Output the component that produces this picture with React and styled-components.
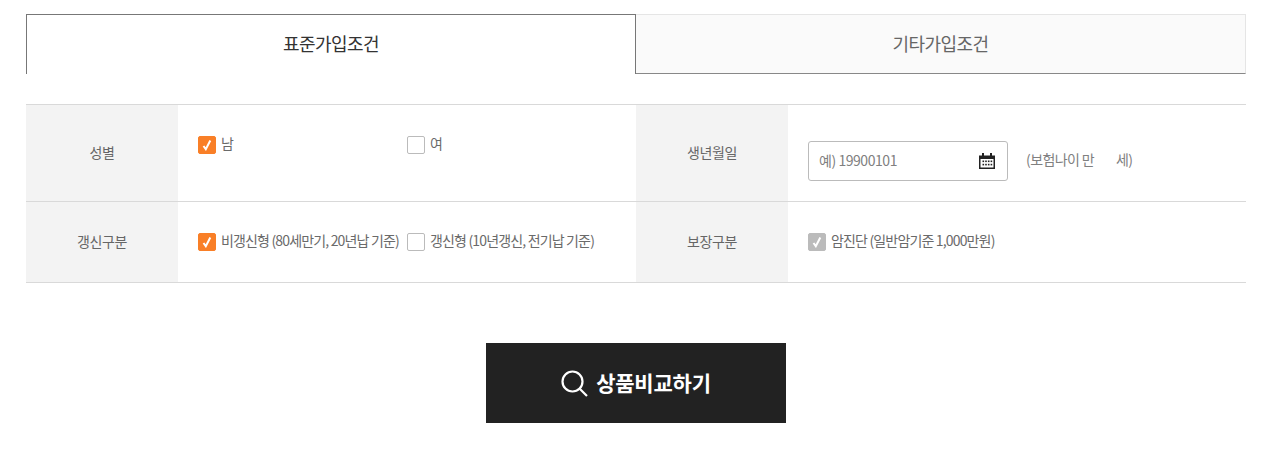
import React from "react";
import styled, { createGlobalStyle } from "styled-components";

const GlobalStyle = createGlobalStyle`
    html, body {
        margin: 0;
        padding: 0;
        background: #fff;
        font-family: "Noto Sans CJK KR", "Noto Sans", sans-serif;
    }
`

const Page = styled.div`
    width: 1220px;
    margin-left: 26px;
    padding-top: 14px;
    padding-bottom: 31px;
`

const Tabs = styled.div`
    display: flex;
    height: 60px;
`

const Tab = styled.div`
    box-sizing: border-box;
    width: 610px;
    height: 60px;
    display: flex;
    align-items: center;
    justify-content: center;
    font-size: 18px;
    letter-spacing: -0.55px;
    padding-bottom: 3px;
    color: ${p => p.$active ? "#333" : "#666"};
    background: ${p => p.$active ? "#fff" : "#fafafa"};
    border: 1px solid ${p => p.$active ? "#777" : "#e5e5e5"};
    border-bottom: ${p => p.$active ? "none" : "1px solid #888"};
    border-left: ${p => p.$active ? "1px solid #777" : "none"};
`

const Table = styled.div`
    display: grid;
    grid-template-columns: 152px 458px 152px 458px;
    margin-top: 30px;
    border-top: 1px solid #d9d9d9;
`

const Head = styled.div`
    display: flex;
    align-items: center;
    justify-content: center;
    box-sizing: border-box;
    padding-bottom: 3px;
    background: #f3f3f3;
    border-bottom: 1px solid #d9d9d9;
    font-size: 14px;
    letter-spacing: -0.4px;
    color: #666;
    height: ${p => p.$h}px;
`

const Cell = styled.div`
    display: flex;
    align-items: flex-start;
    padding: ${p => p.$top}px 0 0 20px;
    border-bottom: 1px solid #d9d9d9;
    height: ${p => p.$h}px;
    box-sizing: border-box;
`

const Option = styled.label`
    display: flex;
    align-items: center;
    width: 209px;
    height: 18px;
    flex: none;
`

const Box = styled.span`
    box-sizing: border-box;
    width: 18px;
    height: 18px;
    flex: none;
    display: flex;
    align-items: center;
    justify-content: center;
    border-radius: 2px;
    border: 1px solid ${p => p.$color || "#bbb"};
    background: ${p => p.$color || "#fff"};
`

const Label = styled.span`
    margin-left: 5px;
    font-size: 14px;
    letter-spacing: -0.84px;
    color: #6a6a6a;
    white-space: nowrap;
    position: relative;
    top: -2px;
`

const DateBox = styled.div`
    box-sizing: border-box;
    width: 200px;
    height: 40px;
    display: flex;
    align-items: center;
    justify-content: space-between;
    padding: 0 12px 0 10px;
    border: 1px solid #bbb;
    border-radius: 3px;
    font-size: 14px;
    letter-spacing: -0.45px;
    color: #808080;
`

const DateText = styled.span`
    position: relative;
    top: -1px;
`

const Age = styled.span`
    display: flex;
    margin-left: 18px;
    height: 40px;
    line-height: 36px;
    font-size: 14px;
    letter-spacing: -0.6px;
    color: #808080;
    white-space: nowrap;
`

const AgeValue = styled.span`
    width: 22px;
`

const ButtonRow = styled.div`
    display: flex;
    justify-content: center;
    margin-top: 60px;
`

const CompareButton = styled.button`
    width: 300px;
    height: 80px;
    display: flex;
    align-items: center;
    justify-content: center;
    gap: 8px;
    padding: 0 0 3px;
    border: none;
    background: #222;
    color: #fff;
    font-family: inherit;
    font-size: 21px;
    font-weight: 700;
    letter-spacing: -0.2px;
`

const IconWrap = styled.span`
    display: flex;
    position: relative;
    top: 2px;
`

const Check = () => (
    <svg width="10" height="12" viewBox="0 0 10 12" fill="none">
        <path d="M1.5 7l2.3 3.2L8.3 1.5" stroke="#fff" strokeWidth="2" />
    </svg>
)

const CheckOption = ({ color, text }) => (
    <Option>
        <Box $color={color}>{color && <Check />}</Box>
        <Label>{text}</Label>
    </Option>
)

const CalendarIcon = () => (
    <svg width="16" height="16" viewBox="0 0 16 16" fill="none">
        <path d="M0 2.5h16V16H0z M1.5 6v8.5h13V6z" fill="#222" fillRule="evenodd" />
        <rect x="3" y="0" width="2" height="4" fill="#222" />
        <rect x="11" y="0" width="2" height="4" fill="#222" />
        {[3.5, 6.2, 8.9, 11.6].map(x => <rect key={x} x={x} y="7.5" width="1.6" height="1.6" fill="#222" />)}
        {[3.5, 6.2, 8.9, 11.6].map(x => <rect key={x} x={x} y="10.8" width="1.6" height="1.6" fill="#222" />)}
    </svg>
)

const SearchIcon = () => (
    <svg width="27" height="27" viewBox="0 0 27 27" fill="none" stroke="#fff" strokeWidth="2.2">
        <circle cx="11.5" cy="11.5" r="10" />
        <path d="M18.5 18.5l7.5 7.5" />
    </svg>
)

const App = () => (
    <Page>
        <GlobalStyle />
        <Tabs>
            <Tab $active>표준가입조건</Tab>
            <Tab>기타가입조건</Tab>
        </Tabs>
        <Table>
            <Head $h={97}>성별</Head>
            <Cell $h={97} $top={31}>
                <CheckOption color="#f97f27" text="남" />
                <CheckOption text="여" />
            </Cell>
            <Head $h={97}>생년월일</Head>
            <Cell $h={97} $top={36}>
                <DateBox>
                    <DateText>예) 19900101</DateText>
                    <CalendarIcon />
                </DateBox>
                <Age>(보험나이 만<AgeValue />세)</Age>
            </Cell>
            <Head $h={81}>갱신구분</Head>
            <Cell $h={81} $top={31}>
                <CheckOption color="#f97f27" text="비갱신형 (80세만기, 20년납 기준)" />
                <CheckOption text="갱신형 (10년갱신, 전기납 기준)" />
            </Cell>
            <Head $h={81}>보장구분</Head>
            <Cell $h={81} $top={31}>
                <CheckOption color="#bbb" text="암진단 (일반암기준 1,000만원)" />
            </Cell>
        </Table>
        <ButtonRow>
            <CompareButton>
                <IconWrap><SearchIcon /></IconWrap>
                상품비교하기
            </CompareButton>
        </ButtonRow>
    </Page>
);

export default App;
